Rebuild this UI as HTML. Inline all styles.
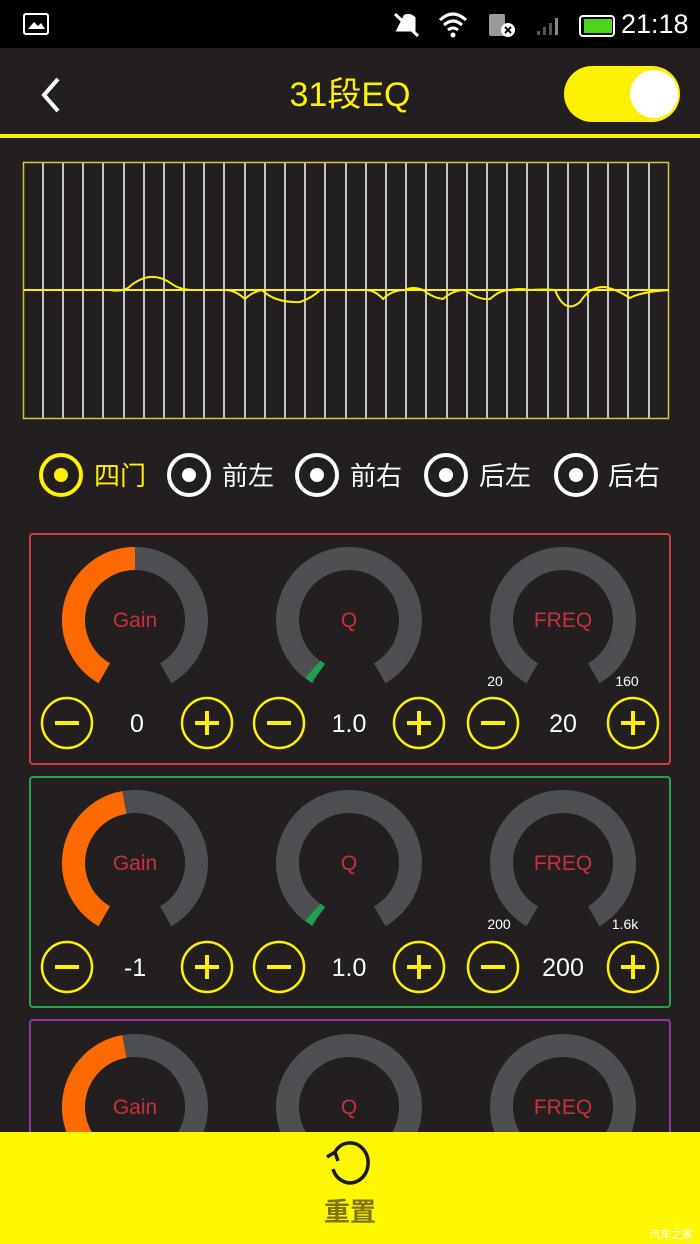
<!DOCTYPE html>
<html><head><meta charset="utf-8"><style>
*{margin:0;padding:0;box-sizing:border-box}
body{width:700px;height:1244px;background:#231f20;overflow:hidden;position:relative;font-family:"Liberation Sans","Noto Sans CJK SC",sans-serif}
.abs{position:absolute}
</style></head><body>
<div class="abs" style="left:0;top:0;width:700px;height:48px;background:#000"></div>
<div class="abs" style="left:23px;top:13px;width:26px;height:22px;border:2.5px solid #fff;border-radius:3px"></div>
<svg class="abs" style="left:0;top:0" width="700" height="48">
<path d="M28 29 L34 22 L38 26 L41 23 L45 29Z" fill="#fff"/>
<path d="M395 14 L418 36 M398 30 L405 16 Q410 14 414 18 L414 30Z" stroke="#fff" stroke-width="3" fill="#fff"/>
<path d="M440 20 Q453 8 466 20 M444 25 Q453 17 462 25 M448 30 Q453 26 458 30" stroke="#fff" stroke-width="3" fill="none"/><circle cx="453" cy="35" r="2.5" fill="#fff"/>
<rect x="489" y="14" width="16" height="22" rx="2" fill="#999"/><circle cx="508" cy="30" r="7" fill="#fff"/><path d="M505 27 L511 33 M511 27 L505 33" stroke="#000" stroke-width="2"/>
<rect x="537" y="31" width="3" height="4" fill="#555"/><rect x="543" y="27" width="3" height="8" fill="#555"/><rect x="549" y="23" width="3" height="12" fill="#555"/><rect x="555" y="18" width="3" height="17" fill="#888"/>
<rect x="580" y="16" width="34" height="20" rx="3" fill="none" stroke="#fff" stroke-width="2"/><rect x="584" y="19" width="28" height="14" fill="#4fd41d"/>
</svg>
<div class="abs" style="left:621px;top:9px;color:#fff;font-size:27px">21:18</div>
<svg class="abs" style="left:0;top:48px" width="700" height="92">
<path d="M58 31 L44 47 L58 63" stroke="#fff" stroke-width="4" fill="none"/>
<rect x="564" y="18" width="116" height="56" rx="28" fill="#fff100"/>
<circle cx="654" cy="46" r="24" fill="#fff"/>
<rect x="0" y="86" width="700" height="4" fill="#fff100"/>
</svg>
<div class="abs" style="left:0;top:67px;width:700px;text-align:center;color:#fff100;font-size:34px">31段EQ</div>
<svg class="abs" style="left:0;top:0" width="700" height="430">
<rect x="23.5" y="162.5" width="645" height="256" fill="none" stroke="#d6c830" stroke-width="1.5"/>
<g stroke="#c4c4c4" stroke-width="2">
<path d="M43 163V418M63 163V418M83 163V418M103 163V418M124 163V418M144 163V418M164 163V418M184 163V418M204 163V418M224 163V418M245 163V418M265 163V418M285 163V418M305 163V418M325 163V418M346 163V418M366 163V418M386 163V418M406 163V418M426 163V418M447 163V418M467 163V418M487 163V418M507 163V418M527 163V418M548 163V418M568 163V418M588 163V418M608 163V418M628 163V418M649 163V418"/>
</g>
<path d="M24 290H669" stroke="#fff100" stroke-width="2"/>
<path d="M24 290 L110 290 Q120 292 128 288 Q150 268 172 284 Q180 290 195 290 L225 290 Q235 290 245 299 Q252 292 262 290 Q275 303 300 302 Q312 298 320 290 L365 290 Q375 290 383 299 Q392 290 405 290 Q413 286 423 290 Q433 298 443 299 Q453 290 465 290 Q478 300 490 299 Q500 290 510 290 Q520 288 530 290 Q545 289 555 290 Q565 315 580 302 Q590 286 605 287 Q618 290 630 298 Q640 292 669 290" stroke="#fff100" stroke-width="2" fill="none"/>
</svg>
<svg class="abs" style="left:0;top:440px" width="700" height="70">
<circle cx="61" cy="35" r="20" fill="none" stroke="#fff100" stroke-width="4"/><circle cx="61" cy="35" r="7" fill="#fff100"/>
<circle cx="189" cy="35" r="20" fill="none" stroke="#fff" stroke-width="4"/><circle cx="189" cy="35" r="7" fill="#fff"/>
<circle cx="317" cy="35" r="20" fill="none" stroke="#fff" stroke-width="4"/><circle cx="317" cy="35" r="7" fill="#fff"/>
<circle cx="446" cy="35" r="20" fill="none" stroke="#fff" stroke-width="4"/><circle cx="446" cy="35" r="7" fill="#fff"/>
<circle cx="576" cy="35" r="20" fill="none" stroke="#fff" stroke-width="4"/><circle cx="576" cy="35" r="7" fill="#fff"/>
<g font-size="26" font-family="Liberation Sans,Noto Sans CJK SC,sans-serif">
<text x="94" y="45" fill="#fff100">四门</text><text x="222" y="45" fill="#fff">前左</text><text x="350" y="45" fill="#fff">前右</text><text x="479" y="45" fill="#fff">后左</text><text x="608" y="45" fill="#fff">后右</text></g>
</svg>
<svg class="abs" style="left:0;top:0" width="700" height="1244" font-family="Liberation Sans,sans-serif">
<defs>
<path id="g" d="M-30.75 53.26 A61.5 61.5 0 1 1 30.75 53.26" fill="none" stroke="#4d4f53" stroke-width="23"/>
<g id="btns"><circle cx="0" cy="0" r="25" fill="none" stroke="#fff100" stroke-width="2.5"/><path d="M-12 0H12" stroke="#fff100" stroke-width="4"/></g>
<g id="btnp"><circle cx="0" cy="0" r="25" fill="none" stroke="#fff100" stroke-width="2.5"/><path d="M-12 0H12M0 -12V12" stroke="#fff100" stroke-width="4"/></g>
</defs>
<rect x="30" y="534" width="640" height="230" rx="3" fill="none" stroke="#d03a3e" stroke-width="2"/>
<rect x="30" y="777" width="640" height="230" rx="3" fill="none" stroke="#24a34a" stroke-width="2"/>
<rect x="30" y="1020" width="640" height="200" rx="3" fill="none" stroke="#8d3aa0" stroke-width="2"/>
<g transform="translate(0,620)">
<g transform="translate(135,0)"><use href="#g"/><path d="M-30.75 53.26 A61.5 61.5 0 0 1 0 -61.5" fill="none" stroke="#ff6a00" stroke-width="23"/><text x="0" y="7" text-anchor="middle" font-size="21" fill="#c9303a">Gain</text></g>
<g transform="translate(349,0)"><use href="#g"/><path d="M-30.75 53.26 A61.5 61.5 0 0 1 -36 49" fill="none" stroke="#1fa050" stroke-width="23"/><text x="0" y="7" text-anchor="middle" font-size="21" fill="#c9303a">Q</text></g>
<g transform="translate(563,0)"><use href="#g"/><text x="0" y="7" text-anchor="middle" font-size="21" fill="#c9303a">FREQ</text></g>
<text x="495" y="66" text-anchor="middle" font-size="14" fill="#fff">20</text><text x="627" y="66" text-anchor="middle" font-size="14" fill="#fff">160</text>
<g transform="translate(0,103)"><use href="#btns" x="67"/><use href="#btnp" x="207"/><use href="#btns" x="279"/><use href="#btnp" x="419"/><use href="#btns" x="493"/><use href="#btnp" x="633"/>
<g font-size="25" fill="#fff" text-anchor="middle"><text x="137" y="9">0</text><text x="349" y="9">1.0</text><text x="563" y="9">20</text></g></g>
</g>
<g transform="translate(0,863)">
<g transform="translate(135,0)"><use href="#g"/><path d="M-30.75 53.26 A61.5 61.5 0 0 1 -10.68 -60.57" fill="none" stroke="#ff6a00" stroke-width="23"/><text x="0" y="7" text-anchor="middle" font-size="21" fill="#c9303a">Gain</text></g>
<g transform="translate(349,0)"><use href="#g"/><path d="M-30.75 53.26 A61.5 61.5 0 0 1 -36 49" fill="none" stroke="#1fa050" stroke-width="23"/><text x="0" y="7" text-anchor="middle" font-size="21" fill="#c9303a">Q</text></g>
<g transform="translate(563,0)"><use href="#g"/><text x="0" y="7" text-anchor="middle" font-size="21" fill="#c9303a">FREQ</text></g>
<text x="499" y="66" text-anchor="middle" font-size="14" fill="#fff">200</text><text x="625" y="66" text-anchor="middle" font-size="14" fill="#fff">1.6k</text>
<g transform="translate(0,104)"><use href="#btns" x="67"/><use href="#btnp" x="207"/><use href="#btns" x="279"/><use href="#btnp" x="419"/><use href="#btns" x="493"/><use href="#btnp" x="633"/>
<g font-size="25" fill="#fff" text-anchor="middle"><text x="135" y="9">-1</text><text x="349" y="9">1.0</text><text x="563" y="9">200</text></g></g>
</g>
<g transform="translate(0,1107)">
<g transform="translate(135,0)"><use href="#g"/><path d="M-30.75 53.26 A61.5 61.5 0 0 1 -10.68 -60.57" fill="none" stroke="#ff6a00" stroke-width="23"/><text x="0" y="7" text-anchor="middle" font-size="21" fill="#c9303a">Gain</text></g>
<g transform="translate(349,0)"><use href="#g"/><text x="0" y="7" text-anchor="middle" font-size="21" fill="#c9303a">Q</text></g>
<g transform="translate(563,0)"><use href="#g"/><text x="0" y="7" text-anchor="middle" font-size="21" fill="#c9303a">FREQ</text></g>
</g>
<rect x="0" y="1132" width="700" height="112" fill="#fff700"/>
<path d="M335 1152 A18 20 0 1 1 333 1169" fill="none" stroke="#1a1a1a" stroke-width="3.5"/>
<path d="M327 1157 L335 1152 L338 1161" fill="none" stroke="#1a1a1a" stroke-width="3.5"/>
<text x="350" y="1221" text-anchor="middle" font-size="26" font-weight="bold" fill="#7f7600" font-family="Noto Sans CJK SC,sans-serif">重置</text>
<text x="693" y="1238" text-anchor="end" font-size="11" fill="#fff" font-family="Noto Sans CJK SC,sans-serif">汽车之家</text>
</svg>
</body></html>
